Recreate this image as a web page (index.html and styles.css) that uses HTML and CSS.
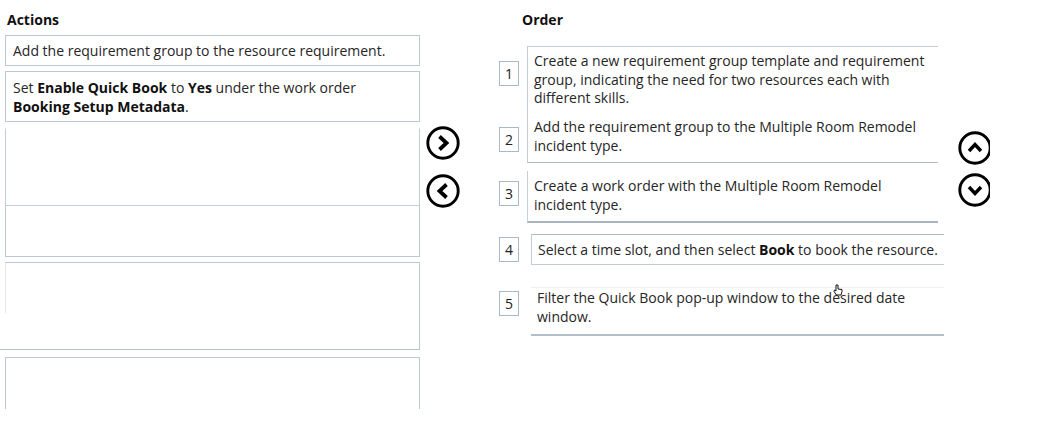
FILE: index.html
```html
<!DOCTYPE html>
<html lang="en">
<head>
<meta charset="utf-8">
<title>Actions / Order</title>
<link rel="stylesheet" href="styles.css">
</head>
<body>
<div class="page">
  <section class="actions">
    <h2 class="heading">Actions</h2>
    <div class="alist">
      <div class="aitem a1">Add the requirement group to the resource requirement.</div>
      <div class="aitem a2">Set <b>Enable Quick Book</b> to <b>Yes</b> under the work order <b>Booking Setup Metadata</b>.</div>
      <div class="aitem a3"></div>
      <div class="aitem a4"></div>
      <div class="aitem a5"></div>
      <div class="aitem a6"></div>
      <div class="aitem a7"></div>
    </div>
  </section>

  <div class="movers">
    <svg class="cbtn" viewBox="0 0 34 34" width="34" height="34"><circle cx="17" cy="17" r="15.2" fill="none" stroke="#000" stroke-width="2.9"/><path d="M13.5 10.5 L20.5 17 L13.5 23.5" fill="none" stroke="#000" stroke-width="3.8" stroke-linejoin="miter"/></svg>
    <svg class="cbtn" viewBox="0 0 34 34" width="34" height="34"><circle cx="17" cy="17" r="15.2" fill="none" stroke="#000" stroke-width="2.9"/><path d="M20.5 10.5 L13.5 17 L20.5 23.5" fill="none" stroke="#000" stroke-width="3.8" stroke-linejoin="miter"/></svg>
  </div>

  <section class="order">
    <h2 class="heading oh">Order</h2>
    <div class="orow r1"><span class="num">1</span><div class="otext t1">Create a new requirement group template and requirement group, indicating the need for two resources each with different skills.</div></div>
    <div class="orow r2"><span class="num">2</span><div class="otext t2">Add the requirement group to the Multiple Room Remodel incident type.</div></div>
    <div class="orow r3"><span class="num">3</span><div class="otext t3">Create a work order with the Multiple Room Remodel incident type.</div></div>
    <div class="orow r4"><span class="num">4</span><div class="otext t4">Select a time slot, and then select <b>Book</b> to book the resource.</div></div>
    <div class="orow r5"><span class="num">5</span><div class="otext t5">Filter the Quick Book pop-up window to the desired date window.<svg class="cursor" viewBox="0 0 10 13" width="10" height="13"><path d="M3 1 L3 7 L1.5 6 L1 7.5 L3.5 11 L8 11 L9 7.5 L9 5.5 L5 5 L5 1 Z" fill="#fff" stroke="#111" stroke-width="1"/></svg></div></div>
  </section>

  <div class="updown">
    <svg class="cbtn" viewBox="0 0 34 34" width="34" height="34"><circle cx="17" cy="17" r="15.2" fill="none" stroke="#000" stroke-width="2.9"/><path d="M11 20 L17 13.5 L23 20" fill="none" stroke="#000" stroke-width="3.4"/></svg>
    <svg class="cbtn" viewBox="0 0 34 34" width="34" height="34"><circle cx="17" cy="17" r="15.2" fill="none" stroke="#000" stroke-width="2.9"/><path d="M11 14 L17 20.5 L23 14" fill="none" stroke="#000" stroke-width="3.4"/></svg>
  </div>
</div>
</body>
</html>
```

FILE: styles.css
```css
html, body {
  margin: 0;
  padding: 0;
  background: #fff;
}
body {
  font-family: "Open Sans", "Noto Sans", sans-serif;
  font-size: 14px;
  color: #262626;
  width: 1038px;
  height: 425px;
  overflow: hidden;
}
b { font-weight: 700; color: #111; }

.page {
  display: flex;
  align-items: flex-start;
}

.heading {
  margin: 0;
  font-size: 14px;
  font-weight: 700;
  line-height: 18px;
  color: #111;
  padding-top: 11px;
  padding-left: 2px;
  height: 24px;
}

/* Actions column */
.actions {
  width: 415px;
  margin-left: 5px;
}
.alist {
  display: flex;
  flex-direction: column;
}
.aitem {
  box-sizing: border-box;
  border: 1px solid #bcc8d6;
  padding: 0 7px;
  line-height: 19px;
  display: flex;
  align-items: center;
}
.a1 { height: 31px; }
.a2 { height: 51px; margin-top: 5px; display: block; padding: 6px 50px 0 7px; }
.a3 { height: 78px; margin-top: 6px; border-color: transparent #c4ccd6 #c4ccd6 #c4ccd6; }
.a4 { height: 51px; border-top: none; }
.a5 { height: 51px; margin-top: 5px; border-bottom: none; border-left-color: #e4e8ee; }
.a6 { height: 37px; border-top: none; border-left: none; margin-left: -5px; border-bottom-color: #b8c2ce; }
.a7 { height: 52px; margin-top: 7px; border-bottom: none; border-color: #c0c8d2; }

/* Move buttons */
.movers {
  display: flex;
  flex-direction: column;
  gap: 14px;
  margin-left: 6px;
  padding-top: 126px;
  width: 34px;
}
.cbtn { display: block; flex: none; }

/* Order column */
.order {
  width: 450px;
  margin-left: 39px;
}
.oh { padding-left: 23px; height: 35px; }
.orow {
  display: flex;
  align-items: flex-start;
}
.num {
  box-sizing: border-box;
  width: 20px;
  height: 25px;
  border: 1px solid #a9b8ca;
  display: flex;
  align-items: center;
  justify-content: center;
  font-size: 14px;
  line-height: 1;
  color: #222;
  flex: none;
}
.otext {
  box-sizing: border-box;
  margin-left: 8px;
  width: 411px;
  line-height: 18.5px;
  padding: 0 10px 0 6px;
  position: relative;
}
.r1 .num { margin-top: 15px; }
.t1 { height: 74px; border-top: 1px solid #c3cbd6; border-left: 1px solid #c3cbd6; padding-top: 5px; }
.r2 .num { margin-top: 7px; }
.t2 { height: 46px; border-left: 1px solid #c3cbd6; border-bottom: 1px solid #b0bccb; padding-top: 1px; margin-top: -3px; }
.r3 { margin-top: 6px; }
.r3 .num { margin-top: 12px; }
.t3 { height: 52px; border-left: 1px solid #c8ced6; border-bottom: 2px solid #a9b4c2; padding-top: 6px; margin-top: 2px; }
.r4 { margin-top: 11px; }
.r4 .num { margin-top: 3px; }
.t4 { height: 31px; margin-left: 12px; width: 413px; border: 1px solid #c3cbd6; border-right: none; padding: 5px 6px 0; line-height: 19px; border-top-color: #aebccc; }
.r5 { margin-top: 22px; }
.r5 .num { margin-top: 4px; }
.t5 { height: 49px; margin-left: 12px; width: 413px; border-top: 1px solid #eef0f3; border-bottom: 2px solid #b4bfcc; padding-top: 1px; }
.cursor {
  position: absolute;
  left: 302px;
  top: -4px;
}

/* Up / down buttons */
.updown {
  width: 32px;
  overflow: hidden;
  margin-left: 9px;
  padding-top: 131px;
  display: flex;
  flex-direction: column;
  gap: 8px;
}
```
